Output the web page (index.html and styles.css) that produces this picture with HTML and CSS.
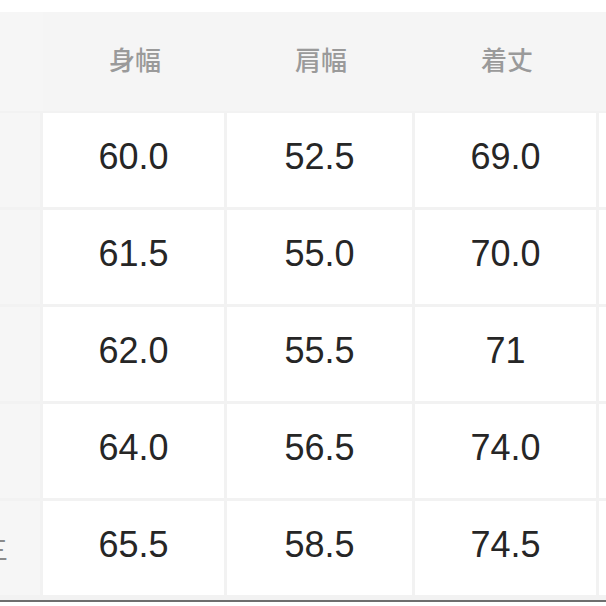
FILE: index.html
```html
<!DOCTYPE html>
<html lang="ja">
<head>
<meta charset="utf-8">
<link rel="stylesheet" href="styles.css">
</head>
<body>
<div class="table">
  <div class="hd side"></div>
  <div class="hd">身幅</div>
  <div class="hd">肩幅</div>
  <div class="hd">着丈</div>
  <div class="hd edge"></div>

  <div class="side"></div>
  <div class="cell">60.0</div>
  <div class="cell">52.5</div>
  <div class="cell">69.0</div>
  <div class="cell edge"></div>

  <div class="side"></div>
  <div class="cell">61.5</div>
  <div class="cell">55.0</div>
  <div class="cell">70.0</div>
  <div class="cell edge"></div>

  <div class="side"></div>
  <div class="cell">62.0</div>
  <div class="cell">55.5</div>
  <div class="cell">71</div>
  <div class="cell edge"></div>

  <div class="side"></div>
  <div class="cell">64.0</div>
  <div class="cell">56.5</div>
  <div class="cell">74.0</div>
  <div class="cell edge"></div>

  <div class="side"><span class="label">三</span></div>
  <div class="cell">65.5</div>
  <div class="cell">58.5</div>
  <div class="cell">74.5</div>
  <div class="cell edge"></div>
</div>
</body>
</html>
```

FILE: styles.css
```css
html, body {
  margin: 0;
  padding: 0;
  background: #ffffff;
}
body {
  width: 606px;
  height: 606px;
  overflow: hidden;
  padding-top: 12px;
  box-sizing: border-box;
}
.table {
  display: grid;
  grid-template-columns: 40px 181px 185px 181px 7px;
  grid-template-rows: 98px repeat(5, 94px);
  column-gap: 3px;
  row-gap: 3px;
  background: #f2f2f2;
  padding-bottom: 5px;
  border-bottom: 2px solid #6e6e6e;
  width: 606px;
  overflow: hidden;
}
.hd {
  background: #f5f5f5;
  display: flex;
  align-items: center;
  justify-content: center;
  font-family: "Noto Sans CJK JP", "Noto Sans CJK SC", sans-serif;
  font-size: 26px;
  font-weight: 500;
  color: #9a9a9a;
  margin-bottom: -1px;
  margin-right: -3px;
  padding-bottom: 6px;
  box-sizing: border-box;
}
.hd.edge { margin-right: 0; }
.side {
  background: #f6f6f6;
  display: flex;
  align-items: center;
  justify-content: flex-end;
  overflow: hidden;
  padding-right: 32px;
}
.label {
  font-family: "Noto Sans CJK JP", sans-serif;
  font-size: 26px;
  color: #8a8a8a;
  white-space: nowrap;
}
.cell {
  background: #ffffff;
  display: flex;
  align-items: center;
  justify-content: center;
  font-family: "Liberation Sans", Arial, sans-serif;
  font-size: 36px;
  color: #262626;
  padding-bottom: 7px;
  box-sizing: border-box;
}
```
